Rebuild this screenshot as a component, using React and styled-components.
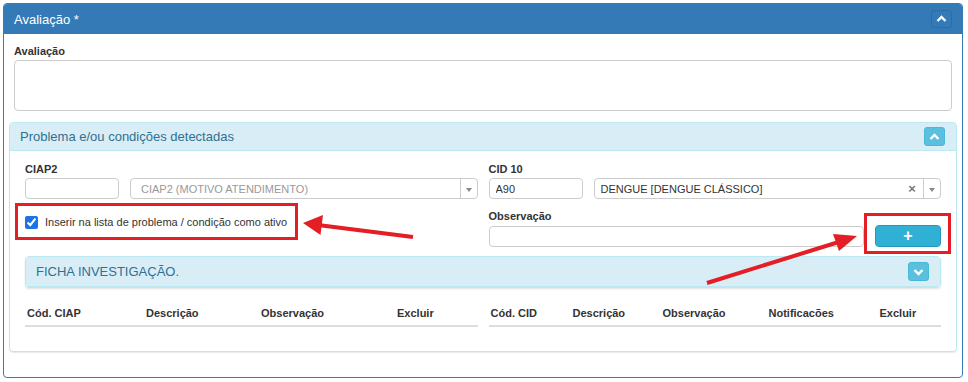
import React from 'react';
import styled, { createGlobalStyle } from 'styled-components';

const GlobalStyle = createGlobalStyle`
  * { box-sizing: border-box; }
  body {
    margin: 0;
    background: #fff;
    font-family: "Liberation Sans", Arial, sans-serif;
    font-size: 11px;
    color: #333;
  }
`;

const Page = styled.div`
  position: relative;
  width: 968px;
  height: 382px;
  padding: 3px;
`;

const Panel = styled.div`
  width: 960px;
  border: 1px solid #337ab7;
  border-radius: 4px;
  background: #fff;
  overflow: hidden;
`;

const Heading = styled.div`
  display: flex;
  align-items: center;
  justify-content: space-between;
  height: 30px;
  padding: 0 10px;
  background: #337ab7;
  color: #fff;
  font-size: 13px;
`;

const Body = styled.div`
  padding: 10px 10px 25px;
`;

const Label = styled.label`
  display: block;
  font-weight: bold;
  font-size: 11px;
  line-height: 14px;
  margin-bottom: 2px;
  color: #333;
`;

const TextArea = styled.textarea`
  display: block;
  width: 100%;
  height: 51px;
  border: 1px solid #ccc;
  border-radius: 4px;
  resize: none;
  outline: none;
`;

const InfoPanel = styled.div`
  margin: 11px -5px 0;
  border: 1px solid #bce8f1;
  border-radius: 4px;
  background: #fff;
  box-shadow: 0 1px 1px rgba(0, 0, 0, 0.08);
  overflow: hidden;
`;

const InfoHeading = styled.div`
  display: flex;
  align-items: center;
  justify-content: space-between;
  height: ${({ h }) => h || 28}px;
  padding: 0 11px 0 10px;
  background: #d9edf7;
  border-bottom: 1px solid #bce8f1;
  color: #31708f;
  font-size: 13px;
`;

const InfoBody = styled.div`
  display: grid;
  grid-template-columns: 1fr 1fr;
  column-gap: 11px;
  padding: 11px 15px 24px;
`;

const Group = styled.div`
  padding-top: ${({ pt }) => pt || 0}px;
`;

const Row = styled.div`
  display: flex;
  align-items: center;
  gap: 11px;
`;

const Input = styled.input`
  width: ${({ w }) => (w ? `${w}px` : 'auto')};
  flex: ${({ w }) => (w ? 'none' : 1)};
  min-width: 0;
  height: 21px;
  padding: 0 6px;
  border: 1px solid #ccc;
  border-radius: 4px;
  font-family: inherit;
  font-size: 11px;
  color: #333;
  outline: none;
`;

const Select = styled.div`
  flex: 1;
  display: flex;
  align-items: center;
  height: 21px;
  border: 1px solid #ccc;
  border-radius: 4px;
  font-size: 11px;
`;

const SelectText = styled.span`
  flex: 1;
  padding-left: ${({ pl }) => pl}px;
  color: ${({ muted }) => (muted ? '#999' : '#333')};
  white-space: nowrap;
  overflow: hidden;
`;

const Clear = styled.span`
  width: 14px;
  color: #777;
  font-weight: bold;
  font-size: 13px;
  text-align: center;
  margin-right: 4px;
`;

const Arrow = styled.span`
  display: flex;
  align-items: center;
  justify-content: center;
  width: 17px;
  height: 100%;
  border-left: 1px solid #ccc;
  &::after {
    content: '';
    margin-top: 3px;
    border-left: 3px solid transparent;
    border-right: 3px solid transparent;
    border-top: 4px solid #888;
  }
`;

const CheckLine = styled.label`
  align-self: start;
  display: flex;
  align-items: center;
  gap: 7px;
  padding-top: 16px;
  line-height: 14px;
  font-size: 11px;
  color: #333;
  input {
    width: 13px;
    height: 13px;
    margin: 0;
    accent-color: #1a73e8;
  }
`;

const CollapseBtn = styled.span`
  display: flex;
  align-items: center;
  justify-content: center;
  width: 21px;
  height: ${({ h }) => h || 19}px;
  border-radius: 3px;
  background: ${({ bg }) => bg};
  border: 1px solid ${({ bd }) => bd};
`;

const AddBtn = styled.button`
  width: 66px;
  height: 22px;
  border: 1px solid #269abc;
  border-radius: 4px;
  background: #31b0d5;
  color: #fff;
  font-size: 16px;
  font-weight: bold;
  line-height: 1;
  padding: 0;
`;

const SubPanel = styled.div`
  grid-column: 1 / -1;
  margin-top: 9px;
  border: 1px solid #bce8f1;
  border-radius: 4px;
  box-shadow: 0 1px 2px rgba(0, 0, 0, 0.12);
  overflow: hidden;
`;

const Table = styled.div`
  display: grid;
  grid-template-columns: ${({ cols }) => cols};
  margin-top: 10px;
  border-bottom: 2px solid #ddd;
`;

const Th = styled.div`
  padding: 8px 2px 5px;
  line-height: 14px;
  font-weight: bold;
  font-size: 11px;
  color: #333;
`;

const Annotations = styled.svg`
  position: absolute;
  top: 0;
  left: 0;
  pointer-events: none;
`;

const Chevron = ({ down }) => (
  <svg width="11" height="8" viewBox="0 0 11 8">
    <polyline
      points={down ? '1.5,2 5.5,6 9.5,2' : '1.5,6 5.5,2 9.5,6'}
      fill="none"
      stroke="#fff"
      strokeWidth="2.4"
    />
  </svg>
);

const ciapCols = ['Cód. CIAP', 'Descrição', 'Observação', 'Excluir'];
const cidCols = ['Cód. CID', 'Descrição', 'Observação', 'Notificacões', 'Excluir'];

export default function App() {
  return (
    <Page>
      <GlobalStyle />
      <Panel>
        <Heading>
          Avaliação *
          <CollapseBtn bg="#337ab7" bd="#2e6da4" h={18}>
            <Chevron />
          </CollapseBtn>
        </Heading>
        <Body>
          <Label>Avaliação</Label>
          <TextArea />

          <InfoPanel>
            <InfoHeading>
              Problema e/ou condições detectadas
              <CollapseBtn bg="#5bc0de" bd="#46b8da">
                <Chevron />
              </CollapseBtn>
            </InfoHeading>
            <InfoBody>
              <Group>
                <Label>CIAP2</Label>
                <Row>
                  <Input w={94} />
                  <Select>
                    <SelectText muted pl={10}>CIAP2 (MOTIVO ATENDIMENTO)</SelectText>
                    <Arrow />
                  </Select>
                </Row>
              </Group>
              <Group>
                <Label>CID 10</Label>
                <Row>
                  <Input w={94} defaultValue="A90" />
                  <Select>
                    <SelectText pl={6}>DENGUE [DENGUE CLÁSSICO]</SelectText>
                    <Clear>×</Clear>
                    <Arrow />
                  </Select>
                </Row>
              </Group>

              <CheckLine>
                <input type="checkbox" defaultChecked />
                Inserir na lista de problema / condição como ativo
              </CheckLine>
              <Group pt={10}>
                <Label>Observação</Label>
                <Row>
                  <Input />
                  <AddBtn>+</AddBtn>
                </Row>
              </Group>

              <SubPanel>
                <InfoHeading h={30}>
                  FICHA INVESTIGAÇÃO.
                  <CollapseBtn bg="#5bc0de" bd="#46b8da">
                    <Chevron down />
                  </CollapseBtn>
                </InfoHeading>
              </SubPanel>

              <Table cols="119px 115px 136px 1fr">
                {ciapCols.map((c) => (
                  <Th key={c}>{c}</Th>
                ))}
              </Table>
              <Table cols="82px 90px 106px 111px 1fr">
                {cidCols.map((c) => (
                  <Th key={c}>{c}</Th>
                ))}
              </Table>
            </InfoBody>
          </InfoPanel>
        </Body>
      </Panel>

      <Annotations width="968" height="382">
        <g fill="none" stroke="#e31e24" strokeWidth="3">
          <rect x="16.5" y="204.5" width="280" height="34" />
          <rect x="865.5" y="214.5" width="84" height="38" />
        </g>
        <g stroke="#e31e24" strokeWidth="4" fill="#e31e24">
          <line x1="413" y1="237" x2="318" y2="225" />
          <polygon points="303,223 323,215 320.5,235" stroke="none" />
          <line x1="707" y1="283" x2="842" y2="241" />
          <polygon points="857,236 833,234 839,251" stroke="none" />
        </g>
      </Annotations>
    </Page>
  );
}
